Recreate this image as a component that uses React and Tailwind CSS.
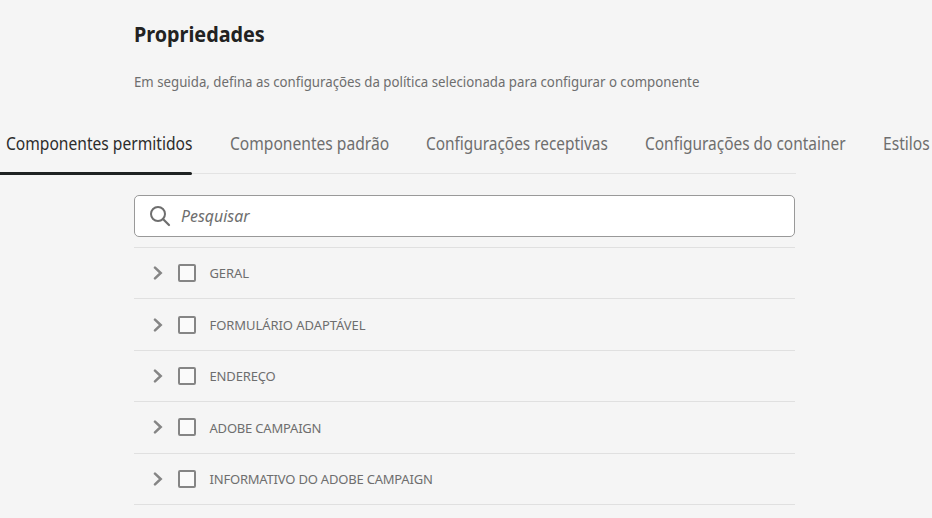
const tabs = [
  { label: 'Componentes permitidos', box: 'ml-[6px] w-[224px]', fit: 'scale-x-[0.866]', active: true },
  { label: 'Componentes padrão', box: 'w-[196px]', fit: 'scale-x-[0.866]' },
  { label: 'Configurações receptivas', box: 'w-[219px]', fit: 'scale-x-[0.855]' },
  { label: 'Configurações do container', box: 'w-[238px]', fit: 'scale-x-[0.858]' },
  { label: 'Estilos', box: 'w-[60px]', fit: 'scale-x-[0.866]' },
];

const groups = [
  { label: 'GERAL', tracking: 'tracking-[-0.1px]' },
  { label: 'FORMULÁRIO ADAPTÁVEL', tracking: 'tracking-[-0.06px]' },
  { label: 'ENDEREÇO', tracking: 'tracking-[-0.15px]' },
  { label: 'ADOBE CAMPAIGN', tracking: 'pt-px tracking-[-0.2px]' },
  { label: 'INFORMATIVO DO ADOBE CAMPAIGN', tracking: 'tracking-[-0.2px]' },
];

export default function App() {
  return (
    <main className="h-[518px] w-[932px] overflow-hidden bg-[#f5f5f5] font-['Noto_Sans',sans-serif] text-[#6e6e6e]">
      <header className="ml-[134px] pt-[19px]">
        <h1 className="h-[30px] whitespace-nowrap text-[21px] leading-[30px] font-bold text-[#222]">
          <span className="inline-block origin-left scale-x-[0.942]">Propriedades</span>
        </h1>
        <p className="mt-[23px] h-5 whitespace-nowrap text-[14px] leading-5">
          <span className="inline-block origin-left scale-x-[0.946]">Em seguida, defina as configurações da política selecionada para configurar o componente</span>
        </p>
      </header>
      <nav className="mt-[36px] flex h-[44px] whitespace-nowrap text-[18px] leading-[30px]">
        {tabs.map((t) => (
          <div key={t.label} className={`shrink-0 ${t.box} ${t.active ? 'text-[#2c2c2c]' : ''}`}>
            <span className={`inline-block origin-left ${t.fit}`}>{t.label}</span>
          </div>
        ))}
      </nav>
      <div className="flex h-[3px] items-start">
        <div className="h-[3px] w-[191.5px] rounded-r-sm bg-[#1f2222]" />
        <div className="mt-px h-px w-[604px] bg-[#e3e3e3]" />
      </div>
      <section className="ml-[134px] mt-5 w-[661.4px]">
        <div className="flex h-[42px] items-center rounded-[5px] border border-[#999] bg-white pl-[14px]">
          <svg className="size-[22px]" viewBox="0 0 22 22" fill="none" stroke="#6e6e6e" strokeWidth="2">
            <circle cx="9" cy="9" r="7" />
            <path d="m14 14 6 6" strokeLinecap="round" strokeWidth="2.2" />
          </svg>
          <span className="ml-[10px] inline-block origin-left scale-x-[0.935] text-[17px] leading-6 italic">Pesquisar</span>
        </div>
        <ul className="mt-[10px] border-t border-[#e0e0e0]">
          {groups.map((g) => (
            <li key={g.label} className="flex h-[51.4px] items-center border-b border-[#e0e0e0] pl-[19px]">
              <svg className="h-[14px] w-[10px]" viewBox="0 0 10 14" fill="none" stroke="#858585" strokeWidth="2.5" strokeLinecap="round">
                <path d="m2 1.7 5.7 5.3L2 12.3" />
              </svg>
              <span className="ml-[15px] size-[18px] rounded-[2px] border-2 border-[#858585] bg-[#fafafa]" />
              <span className={`ml-[13.5px] whitespace-nowrap text-[13px] leading-5 ${g.tracking}`}>{g.label}</span>
            </li>
          ))}
        </ul>
      </section>
    </main>
  );
}
